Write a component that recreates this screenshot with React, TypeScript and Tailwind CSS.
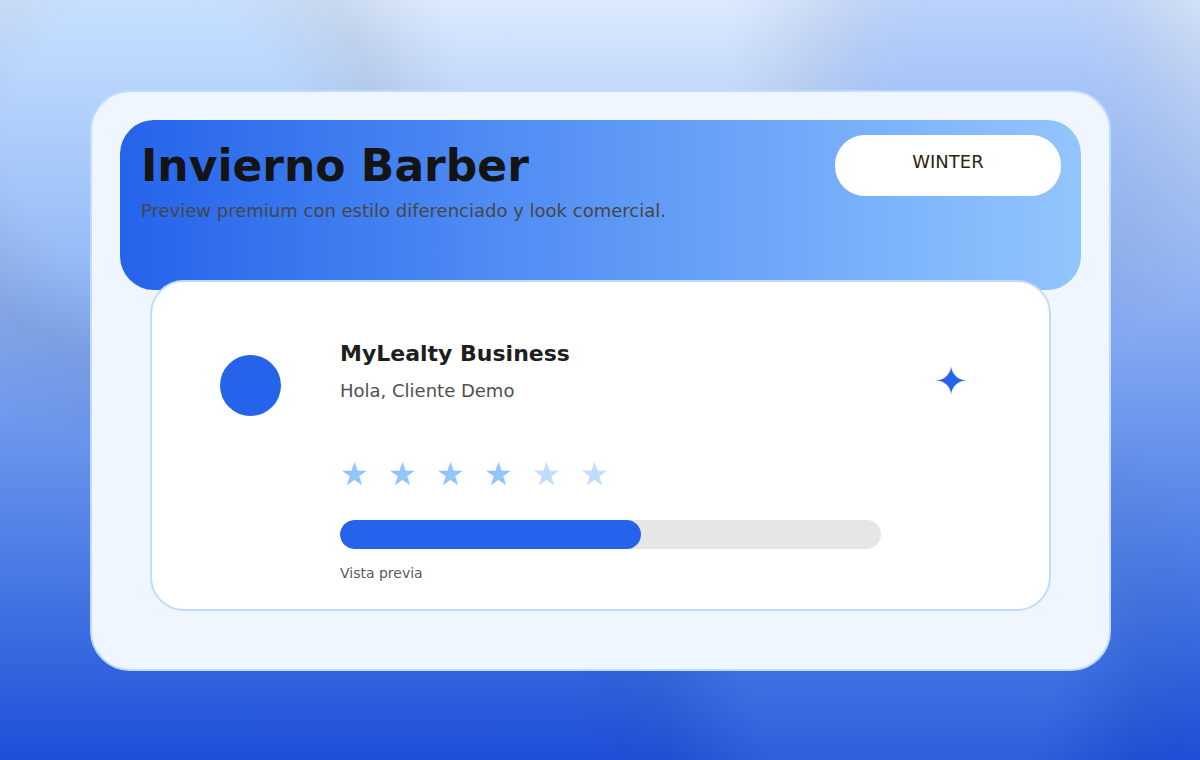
import React from "react";

const stars = [true, true, true, true, false, false];
const progress = { value: 301, max: 541 };

export default function App() {
  return (
    <div className="relative min-h-screen overflow-hidden bg-linear-to-b from-[#dbeafe] to-[#1d4ed8] font-['DejaVu_Sans',sans-serif]">
      {/* background blobs */}
      <div className="absolute inset-0 bg-[radial-gradient(ellipse_320px_320px_at_150px_135px,rgba(147,197,253,0.28)_0%,rgba(147,197,253,0.28)_44%,rgba(128,171,220,0.23)_56%,rgba(74,99,127,0.13)_71%,rgba(29,39,51,0.04)_85%,rgba(0,0,0,0)_100%)]" />
      <div className="absolute inset-0 bg-[radial-gradient(ellipse_270px_320px_at_995px_70px,rgba(37,99,235,0.18)_0%,rgba(37,99,235,0.18)_32%,rgba(31,84,200,0.15)_50%,rgba(19,50,118,0.08)_69%,rgba(7,20,47,0.03)_84%,rgba(0,0,0,0)_100%)]" />
      <div className="absolute inset-0 bg-[radial-gradient(ellipse_330px_330px_at_900px_670px,rgba(147,197,253,0.14)_0%,rgba(147,197,253,0.14)_46%,rgba(125,167,215,0.12)_58%,rgba(74,99,127,0.07)_74%,rgba(29,39,51,0.025)_87%,rgba(0,0,0,0)_100%)]" />

      <main className="relative flex min-h-screen flex-col justify-center pr-[89px] pl-[90px]">
        <div className="rounded-[40px] border-2 border-[#bfdbfe] bg-[#eff6ff] px-7 pt-7 pb-[58px]">
          {/* header */}
          <header className="flex h-[170px] items-start justify-between rounded-[34px] bg-linear-to-r from-[#2563eb] to-[#93c5fd] pr-5 pl-[21px]">
            <div className="pt-6">
              <h1 className="text-[44px] leading-[44px] font-bold text-[#141414]">
                Invierno Barber
              </h1>
              <p className="mt-[11px] text-lg leading-6 text-[#464646]">
                Preview premium con estilo diferenciado y look comercial.
              </p>
            </div>
            <span className="mt-[15px] h-[61px] w-[226px] rounded-[30px] bg-white pt-[15px] text-center text-lg leading-6 text-[#2d2313]">
              WINTER
            </span>
          </header>

          {/* loyalty card */}
          <section className="relative mx-[30px] -mt-[10px] flex rounded-[34px] border-2 border-[#bfdbfe] bg-white pt-[58px] pr-7 pb-[26px] pl-[68px]">
            <div className="w-[120px] shrink-0 pt-[15px]">
              <div className="size-[61px] rounded-full bg-[#2563eb]" />
            </div>

            <div className="flex-1">
              <h2 className="text-[22px] leading-7 font-bold text-[#1e1e1e]">
                MyLealty Business
              </h2>
              <p className="mt-[11px] text-lg leading-6 text-[#505050]">
                Hola, Cliente Demo
              </p>

              <div className="mt-[55px] flex text-[32px] leading-8">
                {stars.map((filled, i) => (
                  <span
                    key={i}
                    className={
                      filled ? "w-12 text-[#93c5fd]" : "w-12 text-[#bfdbfe]"
                    }
                  >
                    ★
                  </span>
                ))}
              </div>

              <div
                role="progressbar"
                aria-labelledby="progress-label"
                aria-valuenow={progress.value}
                aria-valuemax={progress.max}
                className="mt-[30px] h-[29px] overflow-hidden rounded-full bg-[#e6e6e6]"
              >
                <div
                  className="h-full rounded-full bg-[#2563eb]"
                  style={{ width: `${(progress.value / progress.max) * 100}%` }}
                />
              </div>
              <p
                id="progress-label"
                className="mt-[14px] text-sm leading-5 text-[#5a5a5a]"
              >
                Vista previa
              </p>
            </div>

            <div className="w-[140px] shrink-0 pt-[21px] text-center text-[40px] leading-10 text-[#2563eb]">
              ✦
            </div>
          </section>
        </div>
      </main>
    </div>
  );
}
